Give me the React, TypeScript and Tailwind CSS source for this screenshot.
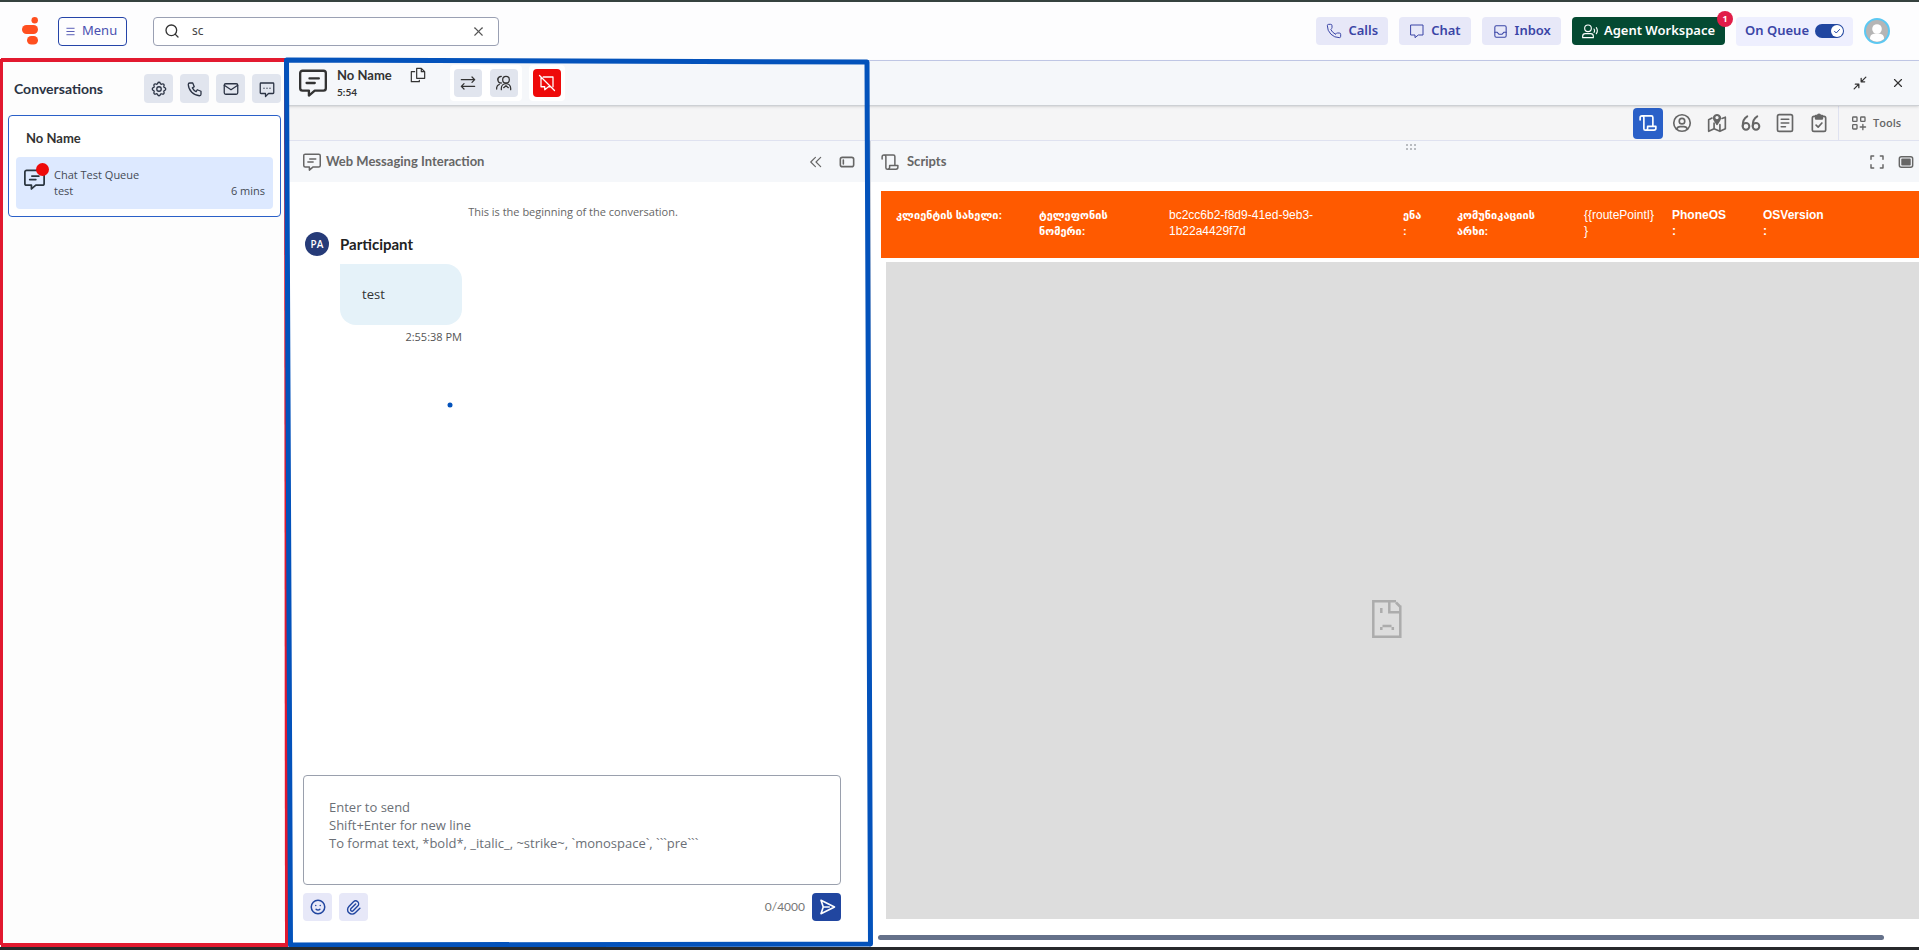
import { ReactNode, useState } from "react";
import { Menu, Phone, Search, X } from "lucide-react";
import {
  TbInbox,
  TbMail,
  TbMoodSmile,
  TbPaperclip,
  TbPhone,
  TbSettings,
  TbUserCircle,
} from "react-icons/tb";

type IconProps = { className?: string; strokeWidth?: number; children?: ReactNode };

const Icon = ({ className = "size-5", strokeWidth = 2, children }: IconProps) => (
  <svg
    viewBox="0 0 24 24"
    className={`shrink-0 ${className}`}
    fill="none"
    stroke="currentColor"
    strokeWidth={strokeWidth}
    strokeLinecap="round"
    strokeLinejoin="round"
    aria-hidden="true"
  >
    {children}
  </svg>
);

const MessageIcon = ({ className, strokeWidth }: IconProps) => (
  <Icon className={className} strokeWidth={strokeWidth}>
    <path d="M3 1.5h18a2 2 0 0 1 2 2v13a2 2 0 0 1-2 2h-7.5L8.500 22.800v-4.300H3a2 2 0 0 1-2-2v-13a2 2 0 0 1 2-2z" />
    <path d="M9 8h8M6.500 12h7" />
  </Icon>
);

const ScriptIcon = ({ className, strokeWidth }: IconProps) => (
  <Icon className={className} strokeWidth={strokeWidth}>
    <path d="M1.500 8V5a2.500 2.500 0 0 1 5 0v14.500a2 2 0 0 0 2 2H20a2.500 2.500 0 0 0 2.500-2.500v-2.500H11.500V19a2.500 2.500 0 0 1-2.500 2.500M4 2.500h12.500a2 2 0 0 1 2 2v12" />
  </Icon>
);

const ChatIcon = ({ className }: IconProps) => (
  <Icon className={className} strokeWidth={1.5}>
    <path d="M3 3h18v15h-7l-5 4v-4H3z" />
  </Icon>
);

const AgentIcon = () => (
  <Icon className="size-4" strokeWidth={1.7}>
    <circle cx="9" cy="8" r="5" />
    <path d="M1 22v-2a4 4 0 0 1 4-4h8a4 4 0 0 1 4 4v2zM18 9c1 1.500 1 3.500 0 5M21.500 7c2 3 2 6 0 9" />
  </Icon>
);

const CopyIcon = () => (
  <Icon className="size-4" strokeWidth={1.8}>
    <path d="M10 2h7l5 5v10H10zM17 2v5h5M7 7H2v15h12v-2" />
  </Icon>
);

const TransferIcon = () => (
  <Icon className="size-4" strokeWidth={1.9}>
    <path d="M2 7h20M18 3l4 4-4 4M22 17H2M6 13l-4 4 4 4" />
  </Icon>
);

const UsersIcon = () => (
  <Icon className="size-4" strokeWidth={1.9}>
    <circle cx="15" cy="7" r="5" />
    <path d="M8 2a5 5 0 0 0 0 10M7 2.500a5 5 0 0 0-4.500 5M8 22v-2a7 7 0 0 1 14 0v2M1 21v-2a6 6 0 0 1 4-5M11.500 19l3.500-3 3.500 3" />
  </Icon>
);

const MessageOffIcon = () => (
  <Icon className="size-[18px]" strokeWidth={1.7}>
    <path d="M7 4h13v13M4 5v12h5v4l5-4h2M2 2l20 20" />
  </Icon>
);

const MapIcon = () => (
  <Icon className="size-5" strokeWidth={2}>
    <path d="M6 6 2 8v14l6.500-3 7 3 6.500-3V5l-4 1.500M8.500 12v7M15.500 14v8" />
    <path d="M12 13.500 8.500 8a4 4 0 1 1 7 0z" fill="currentColor" />
    <circle cx="12" cy="5.500" r="1" fill="#f5f5f6" stroke="#f5f5f6" />
  </Icon>
);

const QuoteIcon = () => (
  <Icon className="size-5" strokeWidth={2.4}>
    <circle cx="6" cy="16" r="4" />
    <circle cx="18" cy="16" r="4" />
    <path d="M2 15.500C2 10 4 6 7.500 4M14 15.500C14 10 16 6 19.500 4" />
  </Icon>
);

const NoteIcon = () => (
  <Icon className="size-5" strokeWidth={2}>
    <rect x="3" y="2" width="18" height="20" rx="2" />
    <path d="M7.500 7.500h9M7.500 12h9M7.500 16.500h5" />
  </Icon>
);

const ClipboardIcon = () => (
  <Icon className="size-5" strokeWidth={2}>
    <rect x="4" y="4" width="16" height="18" rx="2" />
    <path d="M8.500 14.500l2.500 2.500 4.500-5" />
    <path d="M8 3h2.500a1.500 1.500 0 0 1 3 0H16v4H8z" fill="currentColor" />
  </Icon>
);

const ToolsIcon = () => (
  <Icon className="size-4" strokeWidth={2}>
    <rect x="2.500" y="3" width="6.500" height="6.500" rx="1" />
    <rect x="14.500" y="3" width="6.500" height="6.500" rx="1" />
    <rect x="2.500" y="14.500" width="6.500" height="6.500" rx="1" />
    <path d="M17.800 14v8M13.800 18h8" />
  </Icon>
);

const FileSadIcon = () => (
  <svg viewBox="0 0 30 38" className="w-[30px] h-[38px]" fill="none" stroke="#acacac" strokeWidth="2.500" aria-hidden="true">
    <path d="M24 1.300H1.300v35.400h27V5.500M17.300 2v10.300h11M24 2.500l4 4M9.300 8v5M9.300 27v3M20.800 27v3M10.500 26h9" />
  </svg>
);

const Logo = () => (
  <svg viewBox="0 0 16 28" className="w-4 h-7" fill="#ff4f1f" aria-label="Genesys">
    <circle cx="12.700" cy="3.200" r="3.200" />
    <rect x="0" y="8" width="16" height="9" rx="4.500" />
    <rect x="5" y="19" width="11" height="8.500" rx="4.250" />
  </svg>
);

const NavButton = ({ icon, label }: { icon: ReactNode; label: string }) => (
  <button className="flex items-center gap-1.5 h-[28px] px-2.5 rounded bg-[#e7e8f8] text-[13px] font-semibold text-[#3a45a6]">
    {icon}
    {label}
  </button>
);

const TopBar = () => {
  const [query, setQuery] = useState("sc");
  return (
    <header className="flex items-center h-[59px] shrink-0 pl-[22px] pr-[29px] bg-[#fdfdfe] border-b border-[#c3cae8] font-['Noto_Sans',sans-serif]">
      <Logo />
      <button className="flex items-center gap-1.5 ml-5 h-[29px] w-[69px] px-1.5 rounded border border-[#2544a8] text-[13px] text-[#4a50b0]">
        <Menu className="size-[11px] shrink-0" />
        Menu
      </button>
      <label className="flex items-center ml-[26px] w-[346px] h-[29px] pl-2.5 pr-3 rounded border border-[#9aa0b3] bg-white">
        <Search className="size-4 shrink-0 text-[#333]" />
        <input
          aria-label="Search"
          value={query}
          onChange={(e) => setQuery(e.target.value)}
          className="flex-1 min-w-0 ml-3 text-xs text-[#444] outline-none"
        />
        <button aria-label="Clear search" onClick={() => setQuery("")}>
          <X className="size-[15px] text-[#555]" strokeWidth={1.7} />
        </button>
      </label>
      <nav className="flex items-center gap-[11px] ml-auto">
        <NavButton icon={<Phone className="size-4" strokeWidth={1.5} />} label="Calls" />
        <NavButton icon={<ChatIcon className="size-4" />} label="Chat" />
        <NavButton icon={<TbInbox className="size-[17px]" strokeWidth={1.5} />} label="Inbox" />
        <button className="relative flex items-center gap-1.5 h-[28px] px-2.5 rounded bg-[#044a32] text-[13px] font-semibold text-white">
          <AgentIcon />
          Agent Workspace
          <span className="absolute -top-1.5 -right-2 flex items-center justify-center size-4 rounded-full bg-[#e11d48] text-[9px] font-bold">
            1
          </span>
        </button>
        <label className="flex items-center gap-1.5 h-[29px] px-[9px] rounded bg-[#eeeffe] text-[13px] font-semibold text-[#3a45a6]">
          On Queue
          <input type="checkbox" defaultChecked className="peer sr-only" />
          <span className="flex items-center justify-start peer-checked:justify-end w-[29px] h-3.5 px-px rounded-full bg-[#2146a0]">
            <Icon className="size-3 rounded-full bg-white text-[#2146a0]" strokeWidth={2}>
              <path d="M7 12.500l3.500 3.500L17 9" />
            </Icon>
          </span>
        </label>
        <button aria-label="Profile" className="size-[26px] rounded-full">
          <svg viewBox="0 0 26 26" aria-hidden="true">
            <circle cx="13" cy="13" r="12" fill="#b5b5b5" stroke="#5cc8f2" strokeWidth="2" />
            <circle cx="13" cy="11" r="4.800" fill="#fff" />
            <path d="M6 21c0-5 3-5.500 7-5.500s7 .5 7 5.500a10.500 10.500 0 0 1-14 0z" fill="#fff" />
          </svg>
        </button>
      </nav>
    </header>
  );
};

const Sidebar = () => {
  const actions = [
    { label: "Settings", icon: <TbSettings className="size-[18px]" strokeWidth={1.7} /> },
    { label: "New call", icon: <TbPhone className="size-[18px]" strokeWidth={1.7} /> },
    { label: "New email", icon: <TbMail className="size-[18px]" strokeWidth={1.7} /> },
    {
      label: "New message",
      icon: (
        <Icon className="size-[18px]" strokeWidth={1.7}>
          <path d="M4 4h16a1 1 0 0 1 1 1v12a1 1 0 0 1-1 1h-6l-4 4v-4H4a1 1 0 0 1-1-1V5a1 1 0 0 1 1-1zM8 11h.010M12 11h.010M16 11h.010" />
        </Icon>
      ),
    },
  ];
  return (
    <aside className="w-[287px] shrink-0 bg-[#fdfdfd] pt-[13px] pl-2 pr-1.5">
      <div className="flex items-center pl-1.5">
        <h1 className="font-['Lato'] text-sm font-bold text-[#2b3344]">Conversations</h1>
        <div className="flex gap-[7px] ml-auto">
          {actions.map((a) => (
            <button
              key={a.label}
              aria-label={a.label}
              className="flex items-center justify-center size-[29px] rounded bg-[#e1e5ee] text-[#2b3344]"
            >
              {a.icon}
            </button>
          ))}
        </div>
      </div>
      <section className="mt-3 h-[102px] px-[7px] pt-3 rounded border border-[#2a60c8] bg-white">
        <h2 className="pl-2.5 font-['Lato'] text-[13px] leading-5 font-bold text-[#333]">No Name</h2>
        <a href="#conversation" className="flex mt-[9px] h-[52px] px-2 pt-2.5 rounded bg-[#dde9ff]">
          <div className="relative pt-0.5">
            <MessageIcon className="size-[21px] text-[#2b3640]" strokeWidth={2} />
            <span className="absolute -top-1 -right-1 size-[13px] rounded-full bg-[#ee0a0a]" />
          </div>
          <div className="flex-1 ml-[9px] text-[11px] leading-4 text-[#444a55]">
            <p>Chat Test Queue</p>
            <p className="flex justify-between">
              test <span>6 mins</span>
            </p>
          </div>
        </a>
      </section>
    </aside>
  );
};

const InteractionBar = () => (
  <div className="flex items-center h-[45px] shrink-0 pl-3 pr-3.5 bg-[#f5f7fa] border-b border-[#cdd0d4] shadow-sm text-[#333] z-10">
    <MessageIcon className="size-7" strokeWidth={2} />
    <div className="ml-2.5 w-[73px]">
      <h2 className="font-['Lato'] text-[13px] leading-[18px] font-bold">No Name</h2>
      <p className="font-['Lato'] text-[10px] leading-4 font-bold">5:54</p>
    </div>
    <button aria-label="Copy name" className="self-start pt-1.5">
      <CopyIcon />
    </button>
    <div className="flex gap-2 ml-6 p-1 rounded bg-white">
      <button aria-label="Transfer" className="flex items-center justify-center size-7 rounded bg-[#e1e5ee]">
        <TransferIcon />
      </button>
      <button aria-label="Consult" className="flex items-center justify-center size-7 rounded bg-[#e1e5ee]">
        <UsersIcon />
      </button>
    </div>
    <div className="ml-[7px] p-1 rounded bg-white">
      <button aria-label="End chat" className="flex items-center justify-center size-7 rounded bg-[#ee0a0a] text-white">
        <MessageOffIcon />
      </button>
    </div>
    <div className="flex items-center gap-6 ml-auto">
      <button aria-label="Minimize">
        <Icon className="size-3.5" strokeWidth={2.2}>
          <path d="M22 2l-8 8M14 4v6h6M2 22l8-8M10 20v-6H4" />
        </Icon>
      </button>
      <button aria-label="Close">
        <X className="size-3.5" strokeWidth={2} />
      </button>
    </div>
  </div>
);

const ToolBar = () => (
  <div className="flex items-center justify-end h-[35px] shrink-0 bg-[#f5f5f6] border-b border-[#dfe2f0] text-[#666]">
    <div className="flex items-center gap-3.5 pr-[9px]">
      <button aria-label="Scripts" className="flex items-center justify-center w-[30px] h-[31px] -mr-1.5 rounded bg-[#2a60c8] text-white">
        <ScriptIcon className="size-[18px]" strokeWidth={2.2} />
      </button>
      <button aria-label="Customer">
        <TbUserCircle className="size-[22px]" strokeWidth={1.8} />
      </button>
      <button aria-label="Journey"><MapIcon /></button>
      <button aria-label="Responses"><QuoteIcon /></button>
      <button aria-label="Notes"><NoteIcon /></button>
      <button aria-label="Wrap-up"><ClipboardIcon /></button>
    </div>
    <button className="flex items-center gap-1.5 h-full w-[81px] pl-3 border-l border-[#dfe2f0] text-[11px] font-semibold">
      <ToolsIcon />
      Tools
    </button>
  </div>
);

const ChatPanel = () => (
  <section className="flex flex-col w-[584px] shrink-0 bg-white border-r-2 border-[#d2d5dc]">
    <div className="flex items-center h-[41px] shrink-0 pl-4 pr-3.5 bg-[#f5f7fa] text-[#666]">
      <MessageIcon className="size-[18px]" strokeWidth={2} />
      <h2 className="ml-[5px] font-['Lato'] text-[13px] font-bold">Web Messaging Interaction</h2>
      <button aria-label="Collapse" className="ml-auto">
        <Icon className="size-3.5" strokeWidth={2}>
          <path d="M11 4l-8 8 8 8M20 4l-8 8 8 8" />
        </Icon>
      </button>
      <button aria-label="Dock left" className="ml-4">
        <Icon className="size-4" strokeWidth={2.4}>
          <rect x="2" y="5" width="20" height="14" rx="3" />
          <path d="M6.500 9v6" />
        </Icon>
      </button>
    </div>
    <div className="flex-1 px-[18px] pt-5 pb-2">
      <p className="pr-2.5 text-center text-[11px] leading-5 text-[#666]">This is the beginning of the conversation.</p>
      <div className="flex items-center gap-[11px] mt-2.5">
        <span className="flex items-center justify-center size-6 rounded-full bg-[#263b78] text-[10px] font-semibold text-white">
          PA
        </span>
        <h3 className="font-['Lato'] text-[15px] font-bold text-[#222]">Participant</h3>
      </div>
      <div className="mt-2 ml-[35px] w-[122px]">
        <p className="h-[61px] px-[22px] leading-[61px] rounded-2xl rounded-tl-none bg-[#e5f2f9] text-[13px] text-[#333]">test</p>
        <p className="mt-0.5 text-right text-[11px] leading-5 text-[#555]">2:55:38 PM</p>
      </div>
    </div>
    <form className="pl-4 pr-7 pb-[26px]">
      <textarea
        aria-label="Message"
        className="block w-full h-[110px] px-[25px] py-[22px] rounded border border-[#9aa0ad] text-[13px] leading-[18px] placeholder:text-[#6b6f76] resize-none outline-none"
        placeholder={"Enter to send\nShift+Enter for new line\nTo format text, *bold*, _italic_, ~strike~, `monospace`, ```pre```"}
      />
      <div className="flex items-center gap-[7px] mt-2">
        <button type="button" aria-label="Emoji" className="flex items-center justify-center w-[29px] h-7 rounded bg-[#e7e8f8] text-[#2146a0]">
          <TbMoodSmile className="size-[18px]" />
        </button>
        <button type="button" aria-label="Attach file" className="flex items-center justify-center w-[29px] h-7 rounded bg-[#e7e8f8] text-[#2146a0]">
          <TbPaperclip className="size-[17px]" />
        </button>
        <span className="ml-auto font-['Lato'] text-xs text-[#777]">0/4000</span>
        <button type="button" aria-label="Send" className="flex items-center justify-center w-[29px] h-7 rounded bg-[#2146a0] text-white">
          <Icon className="size-[18px]" strokeWidth={2.2}>
            <path d="M4 3l18 9-18 9 3-9zM7 12h8" />
          </Icon>
        </button>
      </div>
    </form>
  </section>
);

const scriptFields = [
  { text: "კლიენტის სახელი:", style: "text-[11px] font-bold" },
  { text: "ტელეფონის\nნომერი:", style: "text-[11px] font-bold" },
  { text: "bc2cc6b2-f8d9-41ed-9eb3-\n1b22a4429f7d", style: "text-xs" },
  { text: "ენა\n:", style: "text-[11px] font-bold" },
  { text: "კომუნიკაციის\nარხი:", style: "text-[11px] font-bold" },
  { text: "{{routePointI}\n}", style: "text-xs" },
  { text: "PhoneOS\n:", style: "text-xs font-bold" },
  { text: "OSVersion\n:", style: "text-xs font-bold" },
];

const ScriptPanel = () => (
  <section className="flex flex-col flex-1 min-w-0 bg-white">
    <div className="relative flex items-center h-[41px] shrink-0 pl-2.5 pr-[5px] bg-[#f5f7fa] text-[#666]">
      <ScriptIcon className="size-[18px]" strokeWidth={2} />
      <h2 className="ml-2 font-['Lato'] text-[13px] font-bold">Scripts</h2>
      <svg viewBox="0 0 10 7" className="absolute top-[3px] left-[535px] w-2.5 h-[7px]" fill="#b9bcc0" aria-hidden="true">
        <path d="M0 0h2v2H0zM4 0h2v2H4zM8 0h2v2H8zM0 4h2v2H0zM4 4h2v2H4zM8 4h2v2H8z" />
      </svg>
      <button aria-label="Full screen" className="ml-auto">
        <Icon className="size-4" strokeWidth={2.2}>
          <path d="M3 8V3h4M17 3h4v5M21 16v5h-4M7 21H3v-5" />
        </Icon>
      </button>
      <button aria-label="Dock" className="ml-[13px]">
        <Icon className="size-4" strokeWidth={2.2}>
          <rect x="2" y="4" width="20" height="16" rx="3" />
          <rect x="6" y="8" width="12" height="8" fill="currentColor" />
        </Icon>
      </button>
    </div>
    <div className="flex flex-col flex-1 min-h-0 pt-[9px] pl-2.5">
      <div className="grid grid-cols-[143px_130px_234px_54px_127px_88px_91px_1fr] h-[67px] shrink-0 pl-[15px] pt-4 bg-[#ff5a00] font-['Liberation_Sans','DejaVu_Sans',sans-serif] leading-4 text-white">
        {scriptFields.map((f) => (
          <p key={f.text} className={`whitespace-pre leading-4 ${f.style}`}>
            {f.text}
          </p>
        ))}
      </div>
      <div className="flex items-center justify-center flex-1 mt-1 ml-[5px] pr-[31px] pt-14 bg-[#ddd]">
        <FileSadIcon />
      </div>
    </div>
    <div className="h-7 shrink-0 pt-4 pl-[7px] pr-[35px]">
      <div className="h-[5px] rounded-full bg-[#65718a]" />
    </div>
  </section>
);

/* Freehand marker frames drawn over the two left panels */
const Markup = () => (
  <svg
    viewBox="0 2 880 945"
    preserveAspectRatio="none"
    className="absolute top-0 left-0 w-[880px] h-full z-20 pointer-events-none"
    fill="none"
    aria-hidden="true"
  >
    <path d="M1.500 59V945" stroke="#e2192f" strokeWidth="3" />
    <path d="M1 60H286M1 945H288" stroke="#e2192f" strokeWidth="4" />
    <path d="M286 60L287 945" stroke="#e2192f" strokeWidth="4" />
    <path d="M286.500 60L867 62L870.500 944L290.500 945Z" stroke="#0352bb" strokeWidth="5" strokeLinejoin="round" />
    <circle cx="450" cy="405" r="2.500" fill="#0352bb" />
  </svg>
);

const App = () => {
  return (
    <div className="relative flex flex-col h-screen overflow-hidden border-t-2 border-b-3 border-t-[#35423f] border-b-[#27292b] bg-white font-['Open_Sans','Noto_Sans',sans-serif]">
      <TopBar />
      <main className="flex flex-1 min-h-0">
        <Sidebar />
        <div className="flex flex-col flex-1 min-w-0">
          <InteractionBar />
          <ToolBar />
          <div className="flex flex-1 min-h-0">
            <ChatPanel />
            <ScriptPanel />
          </div>
        </div>
      </main>
      <Markup />
    </div>
  );
};

export default App;
